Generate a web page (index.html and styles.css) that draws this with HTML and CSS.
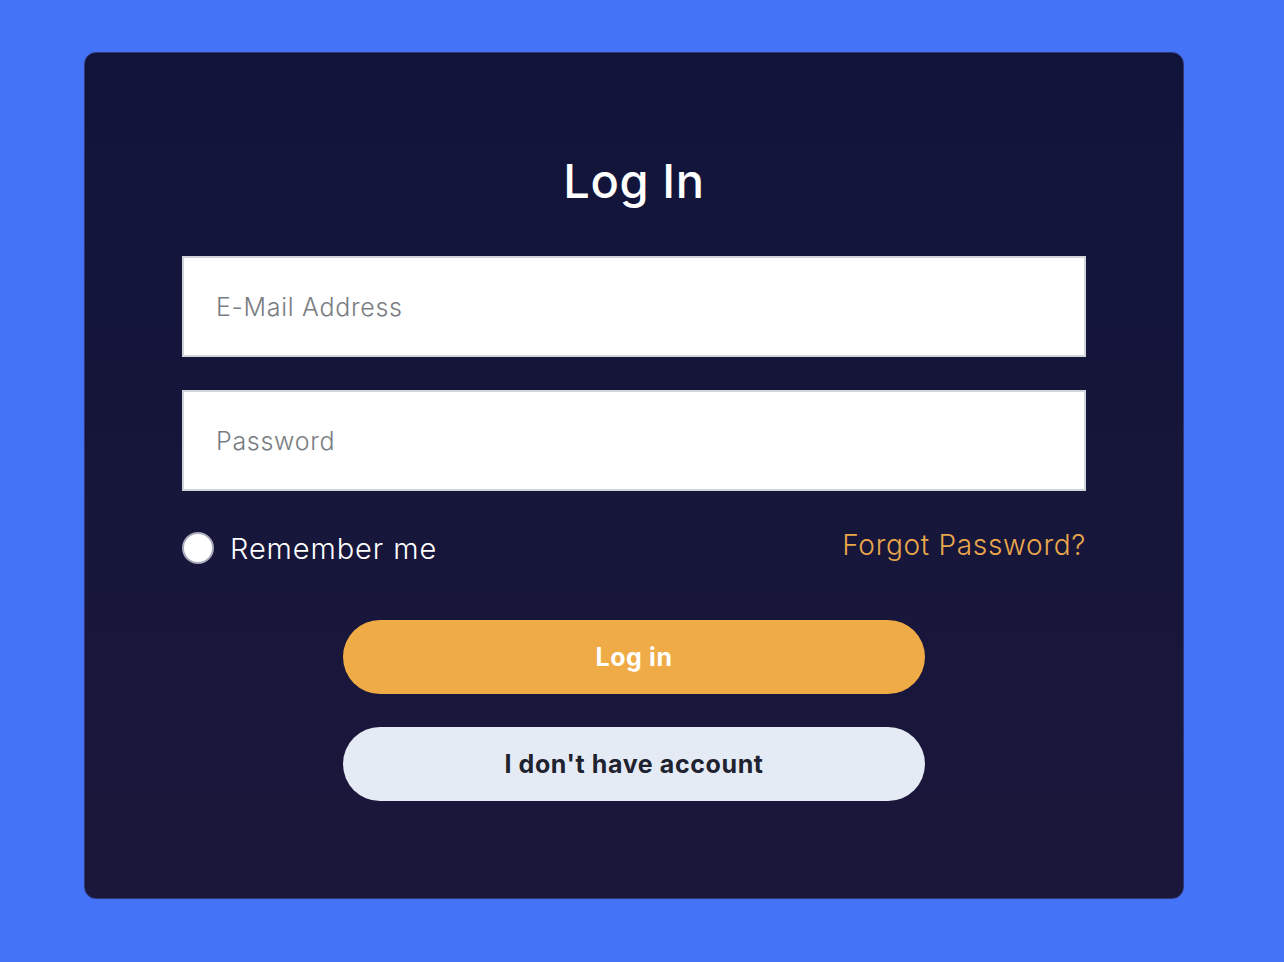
FILE: index.html
```html
<!DOCTYPE html>
<html lang="en">
<head>
<meta charset="utf-8">
<title>Log In</title>
<link rel="stylesheet" href="styles.css">
</head>
<body>
<main class="page">
  <form class="card">
    <h1 class="title">Log In</h1>
    <input class="field" type="email" placeholder="E-Mail Address">
    <input class="field" type="password" placeholder="Password">
    <div class="options">
      <label class="remember"><span class="radio"></span><span>Remember me</span></label>
      <a class="forgot" href="#">Forgot Password?</a>
    </div>
    <div class="actions">
      <button class="btn btn-primary" type="button">Log in</button>
      <button class="btn btn-secondary" type="button">I don't have account</button>
    </div>
  </form>
</main>
</body>
</html>
```
FILE: styles.css
```css
html, body {
  margin: 0;
  padding: 0;
  height: 100%;
}
body {
  background: #4573f7;
  font-family: Inter, "Open Sans", sans-serif;
}
.page {
  padding: 52px 0 0 84px;
}
.card {
  box-sizing: border-box;
  width: 1100px;
  height: 847px;
  border: 1px solid #2f3575;
  border-radius: 12px;
  background: linear-gradient(180deg, #11143a 0%, #1b173b 100%);
  padding: 100px 97px 0 97px;
  display: flex;
  flex-direction: column;
}
.title {
  margin: 0 0 47px 0;
  text-align: center;
  color: #ffffff;
  font-size: 47px;
  font-weight: 500;
  line-height: 56px;
  letter-spacing: 0.6px;
}
.field {
  box-sizing: border-box;
  width: 904px;
  height: 101px;
  border: 2px solid #d2d4dc;
  background: #ffffff;
  padding: 0 0 0 32px;
  font-family: inherit;
  font-size: 25px;
  font-weight: 300;
  letter-spacing: 0.7px;
  color: #333;
  outline: none;
  margin: 0 0 33px 0;
}
.field::placeholder {
  color: #7a7d82;
}
.options {
  display: flex;
  justify-content: space-between;
  align-items: center;
  margin: 0;
  height: 48px;
}
.remember {
  display: flex;
  align-items: center;
  gap: 16px;
  color: #ffffff;
  font-size: 29px;
  font-weight: 300;
  letter-spacing: 0.9px;
}
.radio {
  box-sizing: border-box;
  width: 32px;
  height: 32px;
  border-radius: 50%;
  background: #ffffff;
  border: 2px solid #a9abbd;
}
.forgot {
  color: #eaa84b;
  text-decoration: none;
  font-size: 28px;
  font-weight: 300;
  letter-spacing: 0.7px;
  margin-top: -6px;
}
.actions {
  display: flex;
  flex-direction: column;
  align-items: center;
  gap: 33px;
  margin-top: 48px;
}
.btn {
  width: 582px;
  height: 74px;
  border: none;
  border-radius: 37px;
  font-family: inherit;
  font-size: 25px;
  font-weight: 700;
  letter-spacing: 0.6px;
  cursor: pointer;
}
.btn-primary {
  background: #efab45;
  color: #ffffff;
}
.btn-secondary {
  background: #e5ebf5;
  color: #1f2330;
}
```
